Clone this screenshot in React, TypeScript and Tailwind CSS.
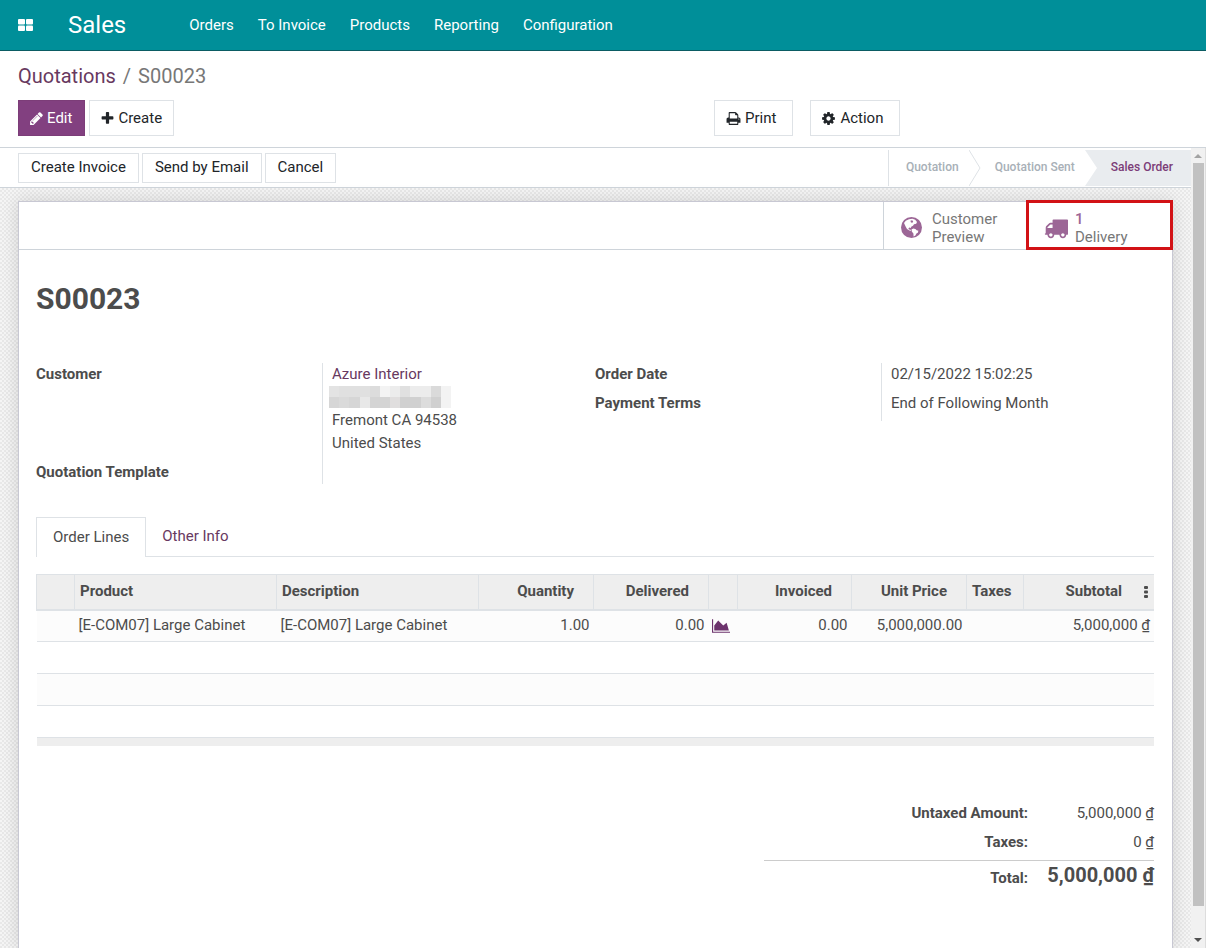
import React, { useState } from "react";

const DONG = "\u20ab";

const menus = ["Orders", "To Invoice", "Products", "Reporting", "Configuration"];

const columns = [
  { label: "Product", width: "w-[202px]", align: "text-left" },
  { label: "Description", width: "w-[202px]", align: "text-left" },
  { label: "Quantity", width: "w-[115px]", align: "text-right" },
  { label: "Delivered", width: "w-[115px]", align: "text-right" },
  { label: "", width: "w-[29px]", align: "text-left" },
  { label: "Invoiced", width: "w-[114px]", align: "text-right" },
  { label: "Unit Price", width: "w-[115px]", align: "text-right" },
  { label: "Taxes", width: "w-[57px]", align: "text-left" },
];

// grey levels of the redacted street line
const mosaic = [
  ["bg-[#e3e3e3]", "bg-[#e0e0e0]", "bg-[#e0e0e0]", "bg-[#e0e0e0]", "bg-[#dcdcdc]", "bg-[#f3f3f3]", "bg-[#ececec]", "bg-[#e0e0e0]", "bg-[#ececec]", "bg-[#ececec]", "bg-[#dadada]", "bg-[#f3f3f3]"],
  ["bg-[#d6d6d6]", "bg-[#dadada]", "bg-[#d6d6d6]", "bg-[#e8e8e8]", "bg-[#d4d4d4]", "bg-[#d4d4d4]", "bg-[#e0dede]", "bg-[#d0d0d0]", "bg-[#d0d0d0]", "bg-[#dcdcdc]", "bg-[#d0d0d0]", "bg-[#f3f3f3]"],
];

type IconProps = { d: string; className: string; viewBox?: string };

function Icon({ d, className, viewBox = "0 0 1792 1792" }: IconProps) {
  return (
    <svg viewBox={viewBox} className={className} fill="currentColor" aria-hidden="true">
      <path d={d} />
    </svg>
  );
}

const pencil =
  "M491 1536l91-91-235-235-91 91v107h128v128h107zm523-928q0-22-22-22-10 0-17 7l-542 542q-7 7-7 17 0 22 22 22 10 0 17-7l542-542q7-7 7-17zm-54-192l416 416-832 832h-416v-416zm683 96q0 53-37 90l-166 166-416-416 166-165q36-38 90-38 53 0 91 38l235 234q37 39 37 91z";
const plus =
  "M1600 736v192q0 40-28 68t-68 28h-416v416q0 40-28 68t-68 28h-192q-40 0-68-28t-28-68v-416h-416q-40 0-68-28t-28-68v-192q0-40 28-68t68-28h416v-416q0-40 28-68t68-28h192q40 0 68 28t28 68v416h416q40 0 68 28t28 68z";
const cog =
  "M1152 896q0-106-75-181t-181-75-181 75-75 181 75 181 181 75 181-75 75-181zm512-109v222q0 12-8 23t-20 13l-185 28q-19 54-39 91 35 50 107 138 10 12 10 25t-9 23q-27 37-99 108t-94 71q-12 0-26-9l-138-108q-44 23-91 38-16 136-29 186-7 28-36 28h-222q-14 0-24.5-8.5t-11.5-21.5l-28-184q-49-16-90-37l-141 107q-10 9-25 9-14 0-25-11-126-114-165-168-7-10-7-23 0-12 8-23 15-21 51-66.5t54-70.5q-27-50-41-99l-183-27q-13-2-21-12.5t-8-23.5v-222q0-12 8-23t19-13l186-28q14-46 39-92-40-57-107-138-10-12-10-24 0-10 9-23 26-36 98.5-107.5t94.5-71.5q13 0 26 10l138 107q44-23 91-38 16-136 29-186 7-28 36-28h222q14 0 24.5 8.5t11.5 21.5l28 184q49 16 90 37l142-107q9-9 24-9 13 0 25 10 129 119 165 170 7 8 7 22 0 12-8 23-15 21-51 66.5t-54 70.5q26 50 41 98l183 28q13 2 21 12.5t8 23.5z";
const printer =
  "M448 1536h896v-256h-896v256zm0-640h896v-384h-160q-40 0-68-28t-28-68v-160h-640v640zm1152 64q0-26-19-45t-45-19-45 19-19 45 19 45 45 19 45-19 19-45zm128 0v416q0 13-9.5 22.5t-22.5 9.5h-224v160q0 40-28 68t-68 28h-960q-40 0-68-28t-28-68v-160h-224q-13 0-22.5-9.5t-9.5-22.5v-416q0-79 56.5-135.5t135.5-56.5h64v-544q0-40 28-68t68-28h672q40 0 88 20t76 48l152 152q28 28 48 76t20 88v256h64q79 0 135.5 56.5t56.5 135.5z";
const truck =
  "M640 1408q0-52-38-90t-90-38-90 38-38 90 38 90 90 38 90-38 38-90zm-384-512h384v-256h-158q-13 0-22 9l-195 195q-9 9-9 22v30zm1280 512q0-52-38-90t-90-38-90 38-38 90 38 90 90 38 90-38 38-90zm256-1088v1024q0 15-4 26.5t-13.5 18.5-16.5 11.5-23.5 6-22.5 2-25.5 0-22.5-.5q0 106-75 181t-181 75-181-75-75-181h-384q0 106-75 181t-181 75-181-75-75-181h-64q-3 0-22.5.5t-25.5 0-22.5-2-23.5-6-16.5-11.5-13.5-18.5-4-26.5q0-26 19-45t45-19v-320q0-8-.5-35t0-38 2.5-34.5 6.5-37 14-30.5 22.5-30l198-198q19-19 50.5-32t58.5-13h160v-192q0-26 19-45t45-19h1024q26 0 45 19t19 45z";
const areaChart =
  "M2048 1536v128h-2048v-1536h128v1408h1920zm-384-1024l256 896h-1664v-576l448-576 576 576z";

function Globe() {
  return (
    <svg viewBox="0 0 21 21" className="size-[21px]" aria-hidden="true">
      <circle cx="10.5" cy="10.5" r="10.5" fill="#9c6696" />
      <path
        d="M3 6l1.800-2.200L8 2.200l3.400-.4 2.800 1 1.800 2.200-.8 1.800-2.200.4-1 1.600-1.800 1-.4 1.200-1.400-.6-1 .8.6 1.200 1.600.4.4 1.200-1.600-.4-2.400-1.600L4.600 9.400z"
        fill="#fff"
      />
      <path d="M9.400 3.800l1.800-.6 1 1.200-.8 1.400-1.400-.4z" fill="#9c6696" />
      <path d="M10.600 12.200l2-.8 2.200.8.8 1 1.800.6-.6 2-1.400.8-1 1.800-1.800 1-.2-2.800-1.600-2.200z" fill="#fff" />
    </svg>
  );
}

function ArrowDivider({ filled }: { filled?: boolean }) {
  return (
    <svg viewBox="0 0 12 36" className="h-9 w-3 shrink-0" aria-hidden="true">
      {filled ? (
        <path d="M0 0H12V36H0L12 18Z" fill="#e9ecef" />
      ) : (
        <path d="M0 0L11 18L0 36" fill="none" stroke="#dee2e6" />
      )}
    </svg>
  );
}

function Amount({ value }: { value: string }) {
  return (
    <>
      {value} {DONG}
    </>
  );
}

export default function App() {
  const [tab, setTab] = useState("Order Lines");

  return (
    <div className="flex min-h-screen flex-col bg-white font-[Roboto,'Noto_Sans',sans-serif] text-[15px] leading-[23px] text-[#4c4c4c]">
      <header className="flex h-[51px] items-center border-b border-[#0b5c63] bg-[#008f99] text-white">
        <button aria-label="Apps" className="ml-[18px]">
          <svg viewBox="0 0 15 12" className="h-3 w-[15px]" fill="currentColor" aria-hidden="true">
            <rect width="7" height="5.5" rx="1" />
            <rect x="8" width="7" height="5.5" rx="1" />
            <rect y="6.5" width="7" height="5.5" rx="1" />
            <rect x="8" y="6.5" width="7" height="5.5" rx="1" />
          </svg>
        </button>
        <a href="#" className="ml-[35px] text-[24px]">
          Sales
        </a>
        <nav className="ml-[63px] flex gap-6">
          {menus.map((menu) => (
            <a key={menu} href="#">
              {menu}
            </a>
          ))}
        </nav>
      </header>

      <section className="border-b border-[#ced4da] px-[18px] pt-3 pb-[11px]">
        <nav className="flex gap-[7px] text-[20px] leading-[26px]">
          <a href="#" className="text-[#68395f]">
            Quotations
          </a>
          <span className="text-[#777]">/</span>
          <span className="text-[#777]">S00023</span>
        </nav>
        <div className="mt-[11px] flex text-[#212529]">
          <div className="flex flex-1 gap-1">
            <button className="flex h-9 items-center gap-[3px] border border-[#7c3d78] bg-[#824080] pr-3 pl-[10px] text-white">
              <Icon d={pencil} className="size-[15px]" />
              Edit
            </button>
            <button className="flex h-9 items-center gap-[3px] border border-[#dee2e6] pr-[11px] pl-[10px]">
              <Icon d={plus} className="size-[15px]" />
              Create
            </button>
          </div>
          <div className="flex w-[474px] gap-[17px]">
            <button className="flex h-9 items-center gap-1 border border-[#dee2e6] pr-4 pl-[11px]">
              <Icon d={printer} className="size-[15px]" />
              Print
            </button>
            <button className="flex h-9 items-center gap-1 border border-[#dee2e6] pr-4 pl-[10px]">
              <Icon d={cog} className="size-[15px]" />
              Action
            </button>
          </div>
        </div>
      </section>

      <div className="flex flex-1">
        <main className="flex flex-1 flex-col">
          <div className="flex h-10 items-center border-b border-[#ced4da] pl-[18px] text-[#212529]">
            <div className="flex flex-1 gap-[3px]">
              {["Create Invoice", "Send by Email", "Cancel"].map((label) => (
                <button key={label} className="h-[30px] border border-[#dee2e6] px-3">
                  {label}
                </button>
              ))}
            </div>
            <div className="flex h-9 items-center border-l border-[#dee2e6] text-[12px] font-medium text-[#a8b0b7]">
              <span className="pr-[10px] pl-[17px]">Quotation</span>
              <ArrowDivider />
              <span className="pr-[10px] pl-[14px]">Quotation Sent</span>
              <ArrowDivider filled />
              <span className="flex h-9 items-center bg-[#e9ecef] pr-[18px] pl-[14px] text-[#7c3d78]">Sales Order</span>
            </div>
          </div>

          <div className="flex flex-1 flex-col bg-[repeating-conic-gradient(#e8e8e8_0_25%,#f5f5f5_0_50%)] bg-size-[4px_4px] px-[18px] pt-[13px]">
            <div className="flex-1 border border-b-0 border-[#c8c8d3] bg-white shadow-[0_0_16px_rgba(0,0,0,0.14)]">
              <div className="flex h-12 justify-end border-b border-[#ced4da] leading-[18px] text-[#777]">
                <button className="flex w-[143px] items-center gap-[10px] border-l border-[#ced4da] pt-1 pl-[17px] text-left">
                  <Globe />
                  <span>
                    Customer
                    <br />
                    Preview
                  </span>
                </button>
                <button className="-mt-[2px] -mr-px flex h-[50px] w-[147px] items-center gap-[7px] border-3 border-[#d21216] pt-[6px] pl-[15px] text-left">
                  <Icon d={truck} className="size-6 text-[#9c6696]" />
                  <span>
                    <b className="font-medium text-[#9c6696]">1</b>
                    <br />
                    Delivery
                  </span>
                </button>
              </div>

              <div className="pr-[18px] pl-[17px]">
                <h1 className="mt-[29px] text-[30px] leading-[40px] font-bold">S00023</h1>

                <div className="mt-11 flex">
                  <dl className="grid w-1/2 grid-cols-[286px_1fr]">
                    <dt className="font-bold">Customer</dt>
                    <dd className="border-l border-[#dee2e6] pb-[6px] pl-[9px]">
                      <a href="#" className="text-[#68395f]">
                        Azure Interior
                      </a>
                      <div className="-ml-[3px] w-[122px] pb-[1px]" aria-hidden="true">
                        {mosaic.map((row, y) => (
                          <div key={y} className="flex h-[11px]">
                            {row.map((shade, x) => (
                              <span key={x} className={"flex-1 " + shade} />
                            ))}
                          </div>
                        ))}
                      </div>
                      Fremont CA 94538
                      <br />
                      United States
                    </dd>
                    <dt className="font-bold">Quotation Template</dt>
                    <dd className="border-l border-[#dee2e6]" />
                  </dl>
                  <dl className="grid w-1/2 grid-cols-[286px_1fr] content-start">
                    <dt className="pb-[6px] font-bold">Order Date</dt>
                    <dd className="border-l border-[#dee2e6] pl-[9px]">02/15/2022 15:02:25</dd>
                    <dt className="pb-[6px] font-bold">Payment Terms</dt>
                    <dd className="border-l border-[#dee2e6] pl-[9px]">End of Following Month</dd>
                  </dl>
                </div>

                <div role="tablist" className="mt-[33px] flex border-b border-[#dee2e6]">
                  {["Order Lines", "Other Info"].map((name) => (
                    <button
                      key={name}
                      role="tab"
                      aria-selected={tab === name}
                      onClick={() => setTab(name)}
                      className={
                        tab === name
                          ? "-mb-px h-10 border border-b-0 border-[#dee2e6] bg-white px-4"
                          : "h-[39px] px-4 text-[#68395f]"
                      }
                    >
                      {name}
                    </button>
                  ))}
                </div>

                <table className="mt-[17px] w-full table-fixed border-collapse">
                  <thead>
                    <tr className="h-[35px] border-t border-b-2 border-[#dee2e6] bg-[#eee]">
                      <th className="w-[38px] border-l border-[#dee2e6]" />
                      {columns.map((col) => (
                        <th
                          key={col.label}
                          className={"border-l border-[#dee2e6] font-bold " + col.width + " " + col.align + (col.align === "text-right" ? " pr-[19px]" : " pl-[5px]")}
                        >
                          {col.label}
                        </th>
                      ))}
                      <th className="border-l border-[#dee2e6] font-bold">
                        <div className="flex items-center justify-end pr-[6px]">
                          Subtotal
                          <button aria-label="Optional columns" className="ml-[22px]">
                            <svg viewBox="0 0 4 12" className="h-3 w-1" fill="currentColor" aria-hidden="true">
                              <rect width="4" height="3" rx="1" />
                              <rect y="4.5" width="4" height="3" rx="1" />
                              <rect y="9" width="4" height="3" rx="1" />
                            </svg>
                          </button>
                        </div>
                      </th>
                    </tr>
                  </thead>
                  <tbody>
                    <tr className="h-8 border-b border-[#dee2e6] bg-[#fcfcfc]">
                      <td />
                      <td className="pl-1">[E-COM07] Large Cabinet</td>
                      <td className="pl-1">[E-COM07] Large Cabinet</td>
                      <td className="pr-1 text-right">1.00</td>
                      <td className="pr-1 text-right">0.00</td>
                      <td className="pl-[3px]">
                        <Icon d={areaChart} viewBox="0 0 2048 1792" className="h-4 w-[18px] text-[#6c336c]" />
                      </td>
                      <td className="pr-1 text-right">0.00</td>
                      <td className="pr-1 text-right">5,000,000.00</td>
                      <td />
                      <td className="pr-1 text-right">
                        <Amount value="5,000,000" />
                      </td>
                    </tr>
                    {["bg-white", "bg-[#fcfcfc]", "bg-white"].map((shade, i) => (
                      <tr key={i} className={"h-8 border-b border-[#dee2e6] " + shade}>
                        <td colSpan={10} />
                      </tr>
                    ))}
                  </tbody>
                  <tfoot>
                    <tr className="h-2 bg-[#eee]">
                      <td colSpan={10} />
                    </tr>
                  </tfoot>
                </table>

                <dl className="mt-14 ml-auto grid w-[390px] grid-cols-[264px_1fr] text-right">
                  <dt className="pb-[6px] font-bold">Untaxed Amount:</dt>
                  <dd>
                    <Amount value="5,000,000" />
                  </dd>
                  <dt className="pb-[6px] font-bold">Taxes:</dt>
                  <dd>
                    <Amount value="0" />
                  </dd>
                  <dt className="border-t border-[#ccc] pt-[6px] font-bold">Total:</dt>
                  <dd className="border-t border-[#ccc] pt-[3px] text-[20px] font-bold">
                    <Amount value="5,000,000" />
                  </dd>
                </dl>
              </div>
            </div>
          </div>
        </main>

        <div className="flex w-[15px] flex-col items-center justify-between border-r border-[#ddd] bg-[#f1f1f1]" aria-hidden="true">
          <svg viewBox="0 0 14 15" className="h-[15px] w-[14px] shrink-0">
            <path d="M3 10h8L7 6z" fill="#a3a3a3" />
          </svg>
          <div className="mb-[27px] w-[11px] flex-1 bg-[#c1c1c1]" />
          <svg viewBox="0 0 14 15" className="h-[15px] w-[14px] shrink-0">
            <path d="M3 5h8L7 9z" fill="#505050" />
          </svg>
        </div>
      </div>
    </div>
  );
}
